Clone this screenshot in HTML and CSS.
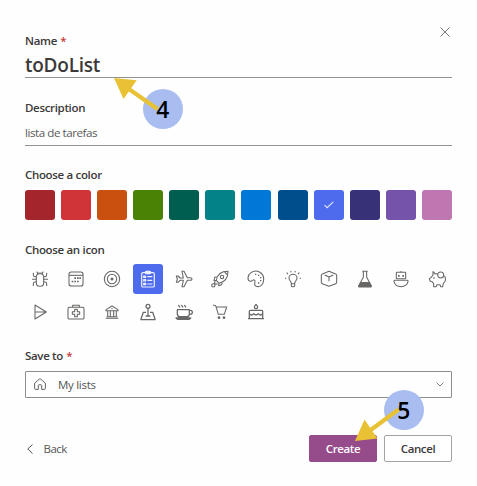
FILE: index.html
```html
<!DOCTYPE html>
<html lang="en">
<head>
<meta charset="utf-8">
<title>Create list</title>
<link rel="stylesheet" href="styles.css">
</head>
<body>
<main class="dialog">
  <button class="close" aria-label="Close"><svg viewBox="0 0 10 10"><path d="M.5.5l9 9M9.500.5l-9 9"/></svg></button>

  <section class="field name-field">
    <div class="label"><span>Name</span> <span class="req">*</span></div>
    <div class="input title"><span>toDoList</span></div>
  </section>

  <section class="field desc-field">
    <div class="label"><span>Description</span></div>
    <div class="input desc"><span>lista de tarefas</span></div>
  </section>

  <section class="field color-field">
    <div class="label"><span>Choose a color</span></div>
    <div class="swatches">
      <span class="swatch dark-red"></span><span class="swatch red"></span><span class="swatch orange"></span><span class="swatch green"></span><span class="swatch dark-green"></span><span class="swatch teal"></span><span class="swatch blue"></span><span class="swatch navy"></span><span class="swatch indigo"><svg viewBox="0 0 10 8"><path d="M.6 4.200l2.500 2.500L9.300.8"/></svg></span><span class="swatch dark-purple"></span><span class="swatch purple"></span><span class="swatch pink"></span>
    </div>
  </section>

  <section class="field icon-field">
    <div class="label"><span>Choose an icon</span></div>
    <div class="icons">
      <span class="icon"><svg viewBox="-30 -30 60 60"><rect x="-11" y="-16" width="22" height="38" rx="10"/><path d="M-7-15q0-4-3-7M7-15q0-4 3-7M-3-16v-4M3-16v-4M-11-7h-4q-5 0-5-5v-7M11-7h4q5 0 5-5v-7M-11 1h-13M11 1h13M-11 9h-4q-5 0-5 5v7M11 9h4q5 0 5 5v7"/></svg></span>
      <span class="icon"><svg viewBox="-30 -30 60 60"><rect x="-21" y="-21" width="42" height="42" rx="7"/><path d="M-21-11h42"/><path class="solid" d="M-5-5h5v5h-5zM3-5h5v5h-5zM10-5h5v5h-5zM-13 5h5v5h-5zM-5 5h5v5h-5zM3 5h5v5h-5z"/></svg></span>
      <span class="icon"><svg viewBox="-30 -30 60 60"><circle r="23"/><circle r="14"/><circle class="solid" r="4.500"/></svg></span>
      <span class="icon selected"><svg viewBox="-30 -30 60 60"><rect x="-19" y="-19" width="38" height="43" rx="4"/><rect x="-8" y="-23" width="16" height="7" rx="3"/><path d="M-13-9h6v4h-6zM-13 2h6v4h-6zM-13 13h6v4h-6zM-2-7h15M-2 4h15M-2 15h15"/></svg></span>
      <span class="icon"><svg viewBox="-30 -30 60 60"><path d="M-23-9h5l6 6h10l-4-20h6L10-4h9q5 0 5 4t-5 4h-9L0 23h-6l4-19h-10l-6 6h-5l3-10z"/></svg></span>
      <span class="icon"><svg viewBox="-30 -30 60 60"><path d="M-11 4C-8-15 7-23 24-23 24-6 15 9-3 13zM-8-7l-8 2-2 10 7-1M7 8l-2 9-9 3 1-7"/><circle cx="6" cy="-6" r="5"/><path d="M14-21l8 8M-14 7l-3 5 4 4 6-2"/><circle cx="-20" cy="19" r="5"/></svg></span>
      <span class="icon"><svg viewBox="-30 -30 60 60"><path d="M-17 7C-28 5-25-12-15-19 2-31 23-18 23 0 23 20 9 26-1 21-10 16 2 8-5 3-9 0-11 8-17 7z"/><path class="solid" d="M-3-16h4v4h-4zM6-13h4v4h-4zM12-6h4v4h-4zM12 3h4v4h-4zM6 10h4v4h-4z"/></svg></span>
      <span class="icon"><svg viewBox="-30 -30 60 60"><path d="M-5 14C-5 7-12 5-12-3a12 11 0 0 1 24 0C12 5 5 7 5 14zM-5 14v6q0 3 5 3t5-3v-6M-20-2h-4M20-2h4M-15-15l-4-4M15-15l4-4M-6-20l-1-4M6-20l1-4"/></svg></span>
      <span class="icon"><svg viewBox="-30 -30 60 60"><path d="M0-23l20 8q3 1 3 4v21q0 3-3 4L0 22l-20-8q-3-1-3-4v-21q0-3 3-4zM-13-12L0-6l13-6M0-6V7"/></svg></span>
      <span class="icon"><svg viewBox="-30 -30 60 60"><path d="M-8-23h16M-5-23v18L-19 20q-1 4 3 4h32q4 0 3-4L5-5v-18"/><path class="solid" d="M-13 9h26l7 12q0 3-3 3h-34q-3 0-3-3z"/></svg></span>
      <span class="icon"><svg viewBox="-30 -30 60 60"><rect x="-14" y="-20" width="28" height="19" rx="2"/><path d="M0-20v-4M-18 4h36q4 0 3 4C18 19 10 23 0 23S-18 19-21 8q-1-4 3-4z"/><path class="solid" d="M-9-12h5v5h-5zM4-12h5v5h-5z"/></svg></span>
      <span class="icon"><svg viewBox="-30 -30 60 60"><path d="M2-15q-4-2-7 0l-7-7v10L-18-4l-5 3 2 7 6 2 5 6v9h7l3-6h9l2 6h6l2-10q8-6 6-17-1-4-3-5"/><circle cx="11" cy="-12" r="9"/><path class="solid" d="M-11-5h4v4h-4z"/></svg></span>
      <span class="icon"><svg viewBox="-30 -30 60 60"><path d="M-15-21L19 0-15 21zM-15 0h34"/></svg></span>
      <span class="icon"><svg viewBox="-30 -30 60 60"><rect x="-24" y="-14" width="48" height="35" rx="4"/><path d="M-10-14v-6h20v6M-4-8h8v7h7v8H4v7h-8V7h-7v-8h7z"/></svg></span>
      <span class="icon"><svg viewBox="-30 -30 60 60"><path d="M-18-7L0-18 18-7v3h-36zM-13-4v18M-5-4v18M5-4v18M13-4v18M-16 14h32M-19 19h38"/><circle class="solid" cy="-10" r="2"/></svg></span>
      <span class="icon heavy"><svg viewBox="-30 -30 60 60"><circle cy="-17" r="6"/><path d="M0-11V11M-6 1h-8l-7 20v2h42v-2L14 1H6M-7 12H7"/></svg></span>
      <span class="icon heavy"><svg viewBox="-30 -30 60 60"><path d="M-20-7h36V6q0 8-8 8h-20q-8 0-8-8zM16-5h3q6 0 6 6t-6 6h-3M-24 18h44q-3 4-7 4h-30q-5 0-7-4zM-17-21l5 7M-8-21l5 7M1-21l5 7"/></svg></span>
      <span class="icon"><svg viewBox="-30 -30 60 60"><path d="M-21-20h5q3 0 4 4l7 23h18l7-22h-31"/><circle class="solid" cx="-3" cy="17" r="4"/><circle class="solid" cx="12" cy="17" r="4"/></svg></span>
      <span class="icon heavy"><svg viewBox="-30 -30 60 60"><path d="M-20 19V-2q0-3 3-3h34q3 0 3 3v21M-24 20h48M-20 5q7 8 13 0 7 8 14 0 6 8 13 0M0-23q5 5 5 8 0 5-5 5t-5-5q0-3 5-8z"/></svg></span>
    </div>
  </section>

  <section class="field save-field">
    <div class="label"><span>Save to</span> <span class="req">*</span></div>
    <div class="select">
      <svg class="home" viewBox="0 0 12 12"><path d="M.6 5.200L6 .6l5.400 4.600v5.200q0 1-1 1H7.700V7.500q0-.7-.7-.7H5q-.7 0-.7.700v3.900H1.600q-1 0-1-1z"/></svg>
      <span>My lists</span>
      <svg class="chevron" viewBox="0 0 8 5"><path d="M.5.500L4 4 7.500.5"/></svg>
    </div>
  </section>

  <footer class="actions">
    <button class="back"><svg viewBox="0 0 6 10"><path d="M5.500.500L.8 5l4.700 4.500"/></svg><span>Back</span></button>
    <button class="btn primary"><span>Create</span></button>
    <button class="btn"><span>Cancel</span></button>
  </footer>

  <div class="callout five"><span class="digit">5</span></div>
  <div class="callout four"></div>
  <svg class="arrows" viewBox="0 0 477 486"><path class="shaft" d="M126 87l31.500 22M368 432l30.500-22.500"/><path class="head" d="M114 78l22.700 2.300L123.500 99zM355 441l9.500-21.500L377.500 438.500z"/></svg>
  <div class="callout four clear"><span class="digit">4</span></div>
</main>
</body>
</html>
```
FILE: styles.css
```css
* { box-sizing: border-box; }
body { margin: 0; background: #fefefe; color: #3b3a39; font-family: "Open Sans", "Noto Sans", sans-serif; font-size: 11.5px; }
button { font: inherit; color: inherit; background: none; border: 0; padding: 0; margin: 0; }
svg { display: block; fill: none; stroke: currentColor; overflow: visible; }
span { white-space: nowrap; }
.dialog { position: relative; width: 477px; height: 486px; padding: 32px 25px 0; overflow: hidden; }
.close { position: absolute; left: 440px; top: 27px; color: #777; }
.close svg { width: 10px; height: 10px; }
.label { height: 18px; line-height: 18px; font-weight: 600; letter-spacing: -0.33px; }
.req { margin-left: 0.5px; color: #c4363c; }
.input { border-bottom: 1px solid #929292; }
.title { height: 28px; line-height: 31px; font-size: 19px; font-weight: 600; letter-spacing: -0.25px; }
.desc-field { margin-top: 21px; }
.desc { height: 23px; margin-top: 6px; line-height: 20px; color: #5b5a58; font-size: 11.6px; letter-spacing: -0.45px; }
.color-field { margin-top: 20px; }
.swatches { display: grid; grid-template-columns: repeat(12, 30px); justify-content: space-between; margin-top: 5.5px; }
.swatch { display: flex; align-items: center; justify-content: center; height: 30px; border-radius: 3px; color: #e5e9ff; }
.swatch svg { width: 10px; height: 8px; stroke-width: 1.1; }
.dark-red { background: #a4262c; }
.red { background: #d13438; }
.orange { background: #ca5010; }
.green { background: #498205; }
.dark-green { background: #005e50; }
.teal { background: #038387; }
.blue { background: #0078d7; }
.navy { background: #004e8c; }
.indigo { background: #4f6bed; }
.dark-purple { background: #373277; }
.purple { background: #7553aa; }
.pink { background: #bf77b2; }
.icon-field { margin-top: 21.5px; }
.icons { display: grid; grid-template-columns: repeat(12, 30px); grid-auto-rows: 30px; justify-content: space-between; row-gap: 3px; margin-top: 5px; }
.icon { display: flex; align-items: center; justify-content: center; border-radius: 3px; color: #686766; }
.icon svg { width: 20px; height: 20px; stroke-width: 3.2; stroke-linejoin: round; }
.heavy svg { stroke-width: 3.8; }
.icon .solid { fill: currentColor; stroke: none; }
.selected { background: #4f6bed; color: #eef1ff; }
.selected svg { stroke-width: 3.6; }
.save-field { margin-top: 20px; }
.select { display: flex; align-items: center; height: 27px; margin-top: 6px; padding: 0 7px 0 8px; border: 1px solid #8d8d8d; border-radius: 1px; color: #555453; letter-spacing: -0.28px; }
.home { width: 12px; height: 12px; margin-right: 12px; margin-top: -2px; stroke-width: 0.9; }
.chevron { width: 8px; height: 5px; margin-left: auto; color: #888; }
.actions { display: flex; align-items: center; gap: 7px; height: 27px; margin-top: 37px; }
.back { display: flex; align-items: center; margin-right: auto; padding-left: 2px; color: #555453; letter-spacing: -0.5px; }
.back svg { width: 6px; height: 10px; margin-right: 10.500px; }
.btn { width: 68px; height: 27px; border: 1px solid #a5a4a3; border-radius: 2px; background: #fff; font-weight: 600; letter-spacing: -0.4px; }
.primary { background: #964b8b; border-color: #964b8b; color: #fff; }
.callout { position: absolute; display: flex; align-items: center; justify-content: center; width: 40px; height: 40px; border-radius: 50%; background: #a9bdf0; color: #000; font-weight: 600; font-size: 24px; line-height: 1; }
.digit { transform: scaleX(0.95); }
.four { left: 143px; top: 89px; }
.clear { background: none; }
.five { left: 384px; top: 390px; }
.arrows { position: absolute; left: 0; top: 0; width: 477px; height: 486px; pointer-events: none; }
.shaft { stroke: #e8c234; stroke-width: 4.200; }
.head { fill: #e8c234; stroke: none; }
```
